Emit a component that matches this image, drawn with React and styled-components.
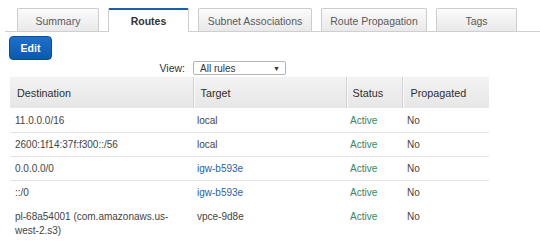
import React from "react";
import styled, { createGlobalStyle } from "styled-components";

const GlobalStyle = createGlobalStyle`
  html, body { margin: 0; padding: 0; background: #fff; }
  body { font-family: "Liberation Sans", Arial, sans-serif; color: #444; }
`;

const Page = styled.div`
  padding-top: 8px;
  width: 540px;
`;

const TabBar = styled.div`
  display: flex;
  align-items: flex-end;
  gap: 9px;
  margin-left: 5px;
  padding-left: 12px;
  border-bottom: 1px solid #cfcfcf;
  height: 23px;
`;

const Tab = styled.div`
  box-sizing: border-box;
  width: ${(p) => p.$w}px;
  height: ${(p) => (p.$active ? 24 : 23)}px;
  margin-bottom: ${(p) => (p.$active ? -1 : 0)}px;
  display: flex;
  align-items: center;
  justify-content: center;
  border: 1px solid #cdcdcd;
  border-bottom: none;
  border-top: ${(p) => (p.$active ? "2px solid #1c5ea8" : "1px solid #cdcdcd")};
  border-radius: 2px 2px 0 0;
  background: ${(p) =>
    p.$active ? "#fff" : "linear-gradient(#fbfbfb, #e9e9e9)"};
  font-size: 10.5px;
  font-weight: ${(p) => (p.$active ? 700 : 400)};
  color: ${(p) => (p.$active ? "#333" : "#5a5a5a")};
  padding-top: ${(p) => (p.$active ? 0 : 1)}px;
`;

const Toolbar = styled.div`
  padding: 4px 0 0 9px;
  display: flex;
`;

const EditButton = styled.button`
  box-sizing: border-box;
  width: 43px;
  height: 24px;
  border: 1px solid #0b4e96;
  border-radius: 4px;
  background: linear-gradient(#1d70cc, #0a59ae);
  color: #fff;
  font-family: "Liberation Sans", Arial, sans-serif;
  font-size: 10.5px;
  font-weight: 700;
  padding: 0;
  margin-bottom: 1px;
`;

const ViewRow = styled.div`
  display: grid;
  grid-template-columns: 183px 93px;
  align-items: center;
  margin-left: 10px;
  width: 479px;
  height: 14px;
`;

const ViewLabel = styled.div`
  text-align: right;
  padding-right: 8px;
  font-size: 10.5px;
  line-height: 14px;
  color: #333;
`;

const Select = styled.div`
  box-sizing: border-box;
  height: 14px;
  border: 1px solid #b5b5b5;
  border-radius: 2px;
  display: flex;
  align-items: center;
  justify-content: space-between;
  padding: 0 5px 0 6px;
  font-size: 10px;
  color: #333;
  background: #fff;
`;

const Arrow = styled.span`
  font-size: 7px;
  color: #333;
`;

const Table = styled.table`
  margin: 2px 0 0 10px;
  width: 479px;
  border-collapse: collapse;
  table-layout: fixed;
`;

const Th = styled.th`
  height: 31px;
  padding: 0 0 0 ${(p) => p.$pad || 7}px;
  text-align: left;
  font-weight: 400;
  font-size: 10.8px;
  color: #2e2e2e;
  background: linear-gradient(#f3f3f3, #e6e6e6);
  border-left: ${(p) => (p.$first ? "none" : "1px solid #d2d2d2")};
  box-shadow: ${(p) => (p.$first ? "none" : "inset 1px 0 0 #fafafa")};
`;

const Tr = styled.tr`
  border-bottom: ${(p) => (p.$divider ? "1px solid #e2e2e2" : "none")};
`;

const Td = styled.td`
  height: ${(p) => (p.$tall ? 39 : 24)}px;
  padding: ${(p) => (p.$tall ? "6px" : "2px")} 10px 0 ${(p) => p.$pad || 5}px;
  vertical-align: ${(p) => (p.$tall ? "top" : "middle")};
  font-size: 10px;
  line-height: 14px;
  color: ${(p) =>
    p.$kind === "active" ? "#2a8a5c" : p.$kind === "link" ? "#2a62a8" : "#444"};
  box-sizing: border-box;
`;

const tabs = [
  { label: "Summary", w: 82 },
  { label: "Routes", w: 81, active: true },
  { label: "Subnet Associations", w: 114 },
  { label: "Route Propagation", w: 106 },
  { label: "Tags", w: 81 },
];

const rows = [
  { dest: "11.0.0.0/16", target: "local", divider: true },
  { dest: "2600:1f14:37f:f300::/56", target: "local", divider: true },
  { dest: "0.0.0.0/0", target: "igw-b593e", link: true, divider: true },
  { dest: "::/0", target: "igw-b593e", link: true },
  { dest: "pl-68a54001 (com.amazonaws.us-west-2.s3)", target: "vpce-9d8e", tall: true },
];

export default function App() {
  return (
    <Page>
      <GlobalStyle />
      <TabBar>
        {tabs.map((t) => (
          <Tab key={t.label} $w={t.w} $active={t.active}>
            {t.label}
          </Tab>
        ))}
      </TabBar>
      <Toolbar>
        <EditButton>Edit</EditButton>
      </Toolbar>
      <ViewRow>
        <ViewLabel>View:</ViewLabel>
        <Select>
          <span>All rules</span>
          <Arrow>▼</Arrow>
        </Select>
      </ViewRow>
      <Table>
        <colgroup>
          <col style={{ width: 183 }} />
          <col style={{ width: 153 }} />
          <col style={{ width: 56 }} />
          <col style={{ width: 87 }} />
        </colgroup>
        <thead>
          <tr>
            <Th $first>Destination</Th>
            <Th>Target</Th>
            <Th $pad={6}>Status</Th>
            <Th $pad={8}>Propagated</Th>
          </tr>
        </thead>
        <tbody>
          {rows.map((r) => (
            <Tr key={r.dest} $divider={r.divider}>
              <Td $tall={r.tall}>{r.dest}</Td>
              <Td $tall={r.tall} $pad={4} $kind={r.link ? "link" : undefined}>
                {r.target}
              </Td>
              <Td $tall={r.tall} $pad={4} $kind="active">
                Active
              </Td>
              <Td $tall={r.tall} $pad={5}>
                No
              </Td>
            </Tr>
          ))}
        </tbody>
      </Table>
    </Page>
  );
}
